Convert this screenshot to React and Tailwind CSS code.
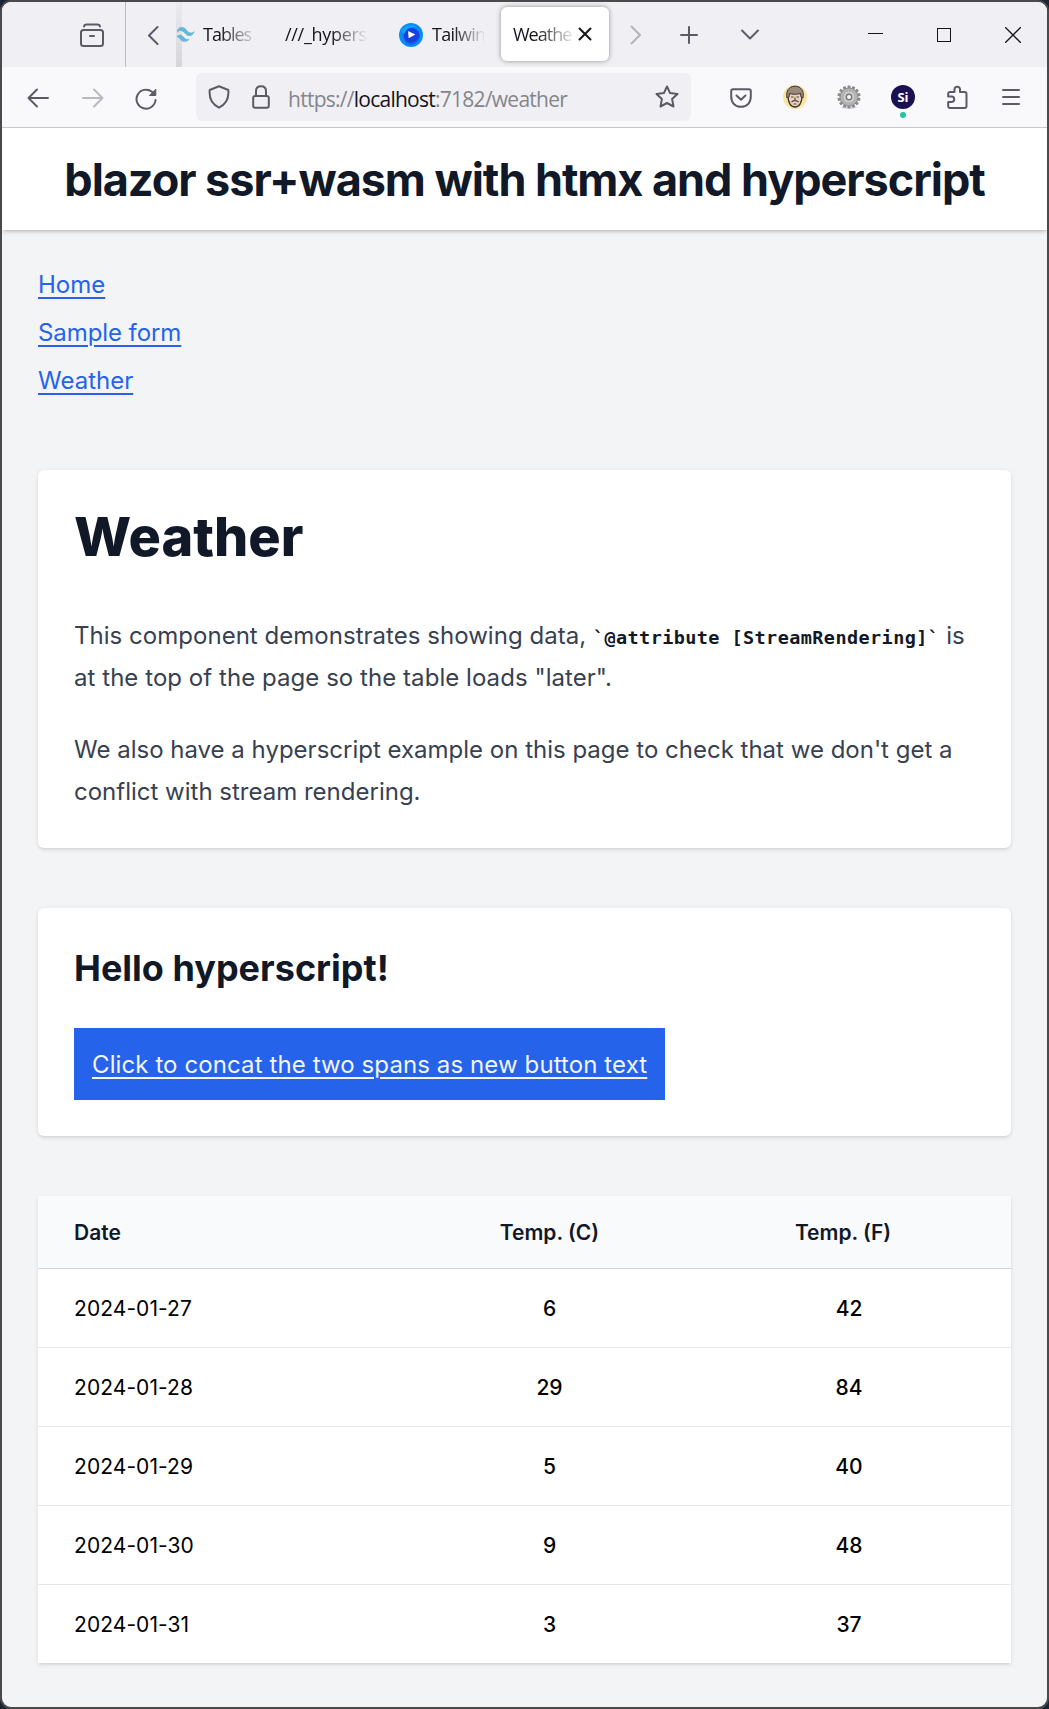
const rows = [
  ['2024-01-27', 6, 42],
  ['2024-01-28', 29, 84],
  ['2024-01-29', 5, 40],
  ['2024-01-30', 9, 48],
  ['2024-01-31', 3, 37],
];

const Icon = ({ w, h, className = '', sw = 2, children }) => (
  <svg
    width={w}
    height={h}
    viewBox={`0 0 ${w} ${h}`}
    fill="none"
    stroke="currentColor"
    strokeWidth={sw}
    strokeLinecap="round"
    strokeLinejoin="round"
    className={`shrink-0 ${className}`}
  >
    {children}
  </svg>
);

const tabText =
  'shrink-0 pb-px whitespace-nowrap font-["Open_Sans",sans-serif] text-[18px] leading-[26px] text-[#15141a]';
const fade = 'mask-[linear-gradient(to_right,black_35%,transparent_110%)]';

function TabBar() {
  return (
    <div className="flex h-[65px] items-center bg-[#f0f0f4] text-[#5b5b66]">
      <Icon w={26} h={26} className="ml-[77px]">
        <path d="M5 4.5C5.3 3 6 2.5 7.5 2.5H18.5C20 2.5 20.7 3 21 4.5" />
        <rect x="2" y="8" width="22" height="16" rx="2.5" />
        <path d="M11 14H15" />
      </Icon>
      <div className="ml-5 h-full w-px bg-[#bbbbc0]" />
      <Icon w={12} h={20} className="ml-[21px]">
        <path d="M10.5 2L2 10.5L10.5 19" />
      </Icon>
      <div className="relative ml-[17px] flex h-full shrink-0 items-center">
        <div className="absolute inset-y-0 left-0 w-[6px] bg-linear-to-b from-[#ebebef] to-[#d6d6da]" />
        <svg width="18" height="15" viewBox="0 0 18 15" className="relative ml-px shrink-0" fill="#66b8d8">
          <path d="M0 3.5C1.5 .8 3.6-.2 6 .2C9.5.8 9.8 4.6 13 5.4C15 5.8 16.8 5 18 3.4C16.8 7.4 14.8 9 12 8.9C8.5 8.7 7.6 5.2 5 4.3C3.3 3.7 1.700 3.6 0 5.6Z" />
          <path d="M0 8.8C1.7 7.6 3.3 7.5 4.8 8.2C6.8 9.1 7.3 11.4 9.4 12.1C10.8 12.5 12 12 13 11.3C11.4 14.2 9.3 15.2 6.7 14.7C3.3 14 3 10.6 0 9.9Z" />
        </svg>
        <div className={`${tabText} ${fade} ml-2 w-[50px] tracking-[-1px]`}>Tables</div>
        <div className={`${tabText} ml-8 w-[84px] tracking-[-0.3px] mask-[linear-gradient(to_right,black_55%,transparent_98%)]`}>
          ///_hypers
        </div>
        <svg width="24" height="24" viewBox="0 0 24 24" className="ml-[30px] shrink-0">
          <circle cx="12" cy="12" r="12" fill="#0a8cf8" />
          <path d="M5 9C7 5 12 4 16.500 6C21 8 22 14 18.500 18C15 21 9 21 6 17C4.500 14.500 4 11.500 5 9Z" fill="#1740de" />
          <path d="M3 6C7 1.500 14 1 18 4.500C13 3 7 5 5.500 11C3.500 10 2.500 8 3 6Z" fill="#0ba5fd" />
          <path d="M4 16C8 21 15 21.500 20 15C20 19 15 23 10 22C7 21 5 19 4 16Z" fill="#1269ef" />
          <path d="M9 8L16.300 11.600L9.700 15.200Z" fill="#fff" />
        </svg>
        <div className={`${tabText} ml-[9px] w-[52px] tracking-[-0.75px] mask-[linear-gradient(to_right,black_40%,transparent_104%)]`}>
          Tailwin
        </div>
        <div className="mb-px ml-[17px] flex h-[54px] w-[108px] items-center rounded-md bg-white pl-3 shadow-[0_0_5px_rgba(0,0,0,0.4)]">
          <div className={`${tabText} w-[60px] tracking-[-1px] mask-[linear-gradient(to_right,black_40%,transparent_106%)]`}>
            Weathe
          </div>
          <Icon w={14} h={14} className="ml-[5px] text-[#15141a]">
            <path d="M1.500 1.500L12.500 12.500M12.500 1.500L1.500 12.500" />
          </Icon>
        </div>
      </div>
      <Icon w={12} h={20} className="ml-[21px] text-[#b3b3ba]">
        <path d="M1.500 1.500L10 10L1.500 18.500" />
      </Icon>
      <Icon w={18} h={18} className="ml-[38px]">
        <path d="M9 1V17M1 9H17" />
      </Icon>
      <Icon w={20} h={12} className="ml-[42px]">
        <path d="M2 1.500L10 9.500L18 1.500" />
      </Icon>
      <Icon w={15} h={15} sw={1} className="ml-[108px] text-[#15141a]">
        <path d="M0 6.500H15" />
      </Icon>
      <div className="ml-[54px] size-[14px] shrink-0 border border-[#15141a]" />
      <Icon w={16} h={16} sw={1.3} className="ml-[54px] text-[#15141a]">
        <path d="M.5 .5L15.500 15.500M15.500 .5L.5 15.500" />
      </Icon>
    </div>
  );
}

function Toolbar() {
  const teeth = Array.from({ length: 14 }, (_, i) => (i * 360) / 14);
  return (
    <div className="flex h-[61px] items-center border-b border-[#cccccf] bg-[#f9f9fb] text-[#5b5b66]">
      <Icon w={22} h={20} className="mt-px ml-[25px]">
        <path d="M10 1.500L1.500 10L10 18.500M1.500 10H21" />
      </Icon>
      <Icon w={22} h={20} className="mt-px ml-[33px] text-[#b9b9bf]">
        <path d="M12 1.500L20.500 10L12 18.500M20.500 10H1" />
      </Icon>
      <Icon w={22} h={22} className="mt-1 ml-[31px]">
        <path d="M20.500 12A9.500 9.500 0 1 1 17 3.800" />
        <path d="M20.800 1.500V7.500H14.800Z" fill="currentColor" strokeWidth="1" />
      </Icon>
      <div className="ml-[39px] flex h-12 w-[495px] shrink-0 items-center rounded-md bg-[#f0f0f4]">
        <Icon w={22} h={24} className="ml-3">
          <path d="M11 1.300L20.300 5C21 12 18.500 19 11 22.700C3.500 19 1 12 1.700 5Z" />
        </Icon>
        <Icon w={18} h={24} className="ml-[22px]">
          <rect x="1.200" y="11" width="15.600" height="11.800" rx="2" />
          <path d="M4 11V6C4 3 6 1.200 9 1.200S14 3 14 6V11" />
        </Icon>
        <div className='ml-[18px] w-[359px] pt-[3px] text-[21px] leading-7 tracking-[-0.74px] whitespace-nowrap font-["Open_Sans",sans-serif] text-[#85858b]'>
          https://<span className="text-[#15141a]">localhost</span>:7182/weather
        </div>
        <Icon w={24} h={24} className="ml-2">
          <path d="M12 1.500L15.100 8.100L22.500 9L17.100 14.100L18.500 21.500L12 18L5.500 21.500L6.900 14.100L1.500 9L8.900 8.100Z" />
        </Icon>
      </div>
      <Icon w={22} h={20} className="mt-px ml-[39px]">
        <path d="M3 1.200H19C20.200 1.200 20.800 1.800 20.800 3V8C20.800 15 17 18.800 11 18.800S1.200 15 1.200 8V3C1.200 1.800 1.800 1.200 3 1.200Z" />
        <path d="M6.500 7.500L11 11.800L15.500 7.500" />
      </Icon>
      <svg width="24" height="24" viewBox="0 0 24 24" className="ml-[31px] shrink-0">
        <circle cx="12" cy="12" r="12" fill="#f8e3a0" />
        <path d="M5 11C5 18 8 22 12 22S19 18 19 11L17 6H7Z" fill="#ead2bd" stroke="#3c342e" strokeWidth="1.300" />
        <path d="M4 13C2.500 6 6 1.200 12 1.200S21.500 6 20 13L18 12L17.500 8.500C14 9.500 9 9.500 6.500 8.500L6 12Z" fill="#998a7b" stroke="#3c342e" strokeWidth="1" />
        <path d="M8 12H10.500M13.500 12H16M12 12.500V15M8.500 17C10.500 15.500 13.500 15.500 15.500 17M10.500 19H13.500" stroke="#54463d" strokeWidth="1.200" fill="none" />
      </svg>
      <svg width="24" height="24" viewBox="0 0 24 24" className="ml-[30px] shrink-0">
        <ellipse cx="12" cy="22.500" rx="8" ry="1.200" fill="#d4d4d4" />
        {teeth.map((a) => (
          <rect key={a} x="10.500" y=".4" width="3" height="5" rx=".6" fill="#8c8c8c" transform={`rotate(${a} 12 12)`} />
        ))}
        <circle cx="12" cy="12" r="9" fill="#b4b4b4" stroke="#858585" strokeWidth=".8" />
        <circle cx="12" cy="12" r="6" fill="#cdcdcd" stroke="#a5a5a5" strokeWidth=".7" />
        <circle cx="12" cy="12" r="2.700" fill="#f9f9fb" stroke="#777" strokeWidth="1.400" />
      </svg>
      <div className="relative ml-[30px] flex size-6 shrink-0 items-center justify-center rounded-full bg-[#1a1153] font-['Open_Sans',sans-serif] text-[13px] leading-none font-bold text-white">
        Si
        <span className="absolute top-[27px] left-[9px] size-[6px] rounded-full bg-[#2ac3a2]" />
      </div>
      <Icon w={22} h={24} className="ml-8">
        <path d="M3 7H7.500V4A2.800 2.800 0 0 1 13 4V7H17.500C18.800 7 19.500 7.700 19.500 9V21C19.500 22.300 18.800 23 17.500 23H3C1.700 23 1.200 22.300 1.200 21V17H4.500A2.700 2.700 0 0 0 4.500 11.500H1.200V9C1.200 7.700 1.800 7 3 7Z" />
      </Icon>
      <Icon w={18} h={16} className="mb-px ml-[33px]">
        <path d="M1 1H17M1 8H17M1 15H17" />
      </Icon>
    </div>
  );
}

const card = 'bg-white shadow-[0_1.5px_4.5px_rgba(0,0,0,0.1),0_1.5px_3px_-1.5px_rgba(0,0,0,0.1)]';
const link = 'text-2xl leading-9 text-[#2563eb] underline decoration-2 underline-offset-4';

export default function App() {
  return (
    <div className="h-[1709px] w-[1049px] bg-[#1b2431]">
      <div className='flex h-full flex-col overflow-hidden rounded-[11px] border-2 border-[#4a4a4a] bg-[#f3f4f6] font-["Inter",sans-serif]'>
        <TabBar />
        <Toolbar />
        <header className="relative bg-white pt-[25px] pb-[23px] text-center shadow-[0_1.5px_4.5px_rgba(0,0,0,0.15),0_1.5px_3px_-1.5px_rgba(0,0,0,0.2)]">
          <h1 className="text-[45px] leading-[54px] font-bold tracking-[-1.05px] whitespace-nowrap text-[#111827]">
            blazor ssr+wasm with htmx and hyperscript
          </h1>
        </header>
        <main className="px-9 pt-[37px]">
          <nav className="flex flex-col items-start gap-3">
            <a className={link}>Home</a>
            <a className={`${link} tracking-[-0.08px]`}>Sample form</a>
            <a className={link}>Weather</a>
          </nav>

          <section className={`${card} mt-[71px] h-[378px] rounded-md px-9 pt-[37px]`}>
            <h1 className="text-[54px] leading-[60px] font-extrabold text-[#111827]">Weather</h1>
            <div className="mt-12 text-2xl leading-[42px] whitespace-nowrap text-[#374151]">
              <p className="tracking-[0.03px]">
                This component demonstrates showing data,{' '}
                <code className='font-["DejaVu_Sans_Mono",monospace] text-[18.5px] leading-none font-bold tracking-[0.41px] text-[#111827]'>
                  `@attribute [StreamRendering]`
                </code>{' '}
                is
                <br />
                <span className="tracking-[0.05px]">at the top of the page so the table loads "later".</span>
              </p>
              <p className="mt-[30px]">
                We also have a hyperscript example on this page to check that we don't get a
                <br />
                conflict with stream rendering.
              </p>
            </div>
          </section>

          <section className={`${card} mt-[60px] h-[228px] rounded-md p-9`}>
            <h2 className="text-4xl leading-[48px] font-bold text-[#111827]">Hello hyperscript!</h2>
            <button className="mt-9 block h-[72px] bg-[#2563eb] px-[18px] pt-[2px] text-2xl leading-9 tracking-[0.1px] whitespace-nowrap text-[#f3f4f6] underline decoration-2 underline-offset-4">
              Click to concat the two spans as new button text
            </button>
          </section>

          <div className={`${card} mt-[60px] text-[21px] leading-[30px]`}>
            <div className="grid grid-cols-[361px_301px_1fr] border-b border-[#d1d5db] bg-[#f9fafb] pt-[22px] pb-5 font-semibold text-[#111827]">
              <div className="pl-9">Date</div>
              <div className="text-center">Temp. (C)</div>
              <div className="pr-[25px] text-center">Temp. (F)</div>
            </div>
            <div className="divide-y divide-gray-200 text-black">
              {rows.map(([date, c, f]) => (
                <div key={date} className="grid grid-cols-[361px_301px_1fr] pt-[25px] pb-[23px]">
                  <div className="pl-9 tracking-[0.07px]">{date}</div>
                  <div className="text-center font-medium">{c}</div>
                  <div className="pr-[13px] text-center font-medium">{f}</div>
                </div>
              ))}
            </div>
          </div>
        </main>
      </div>
    </div>
  );
}
